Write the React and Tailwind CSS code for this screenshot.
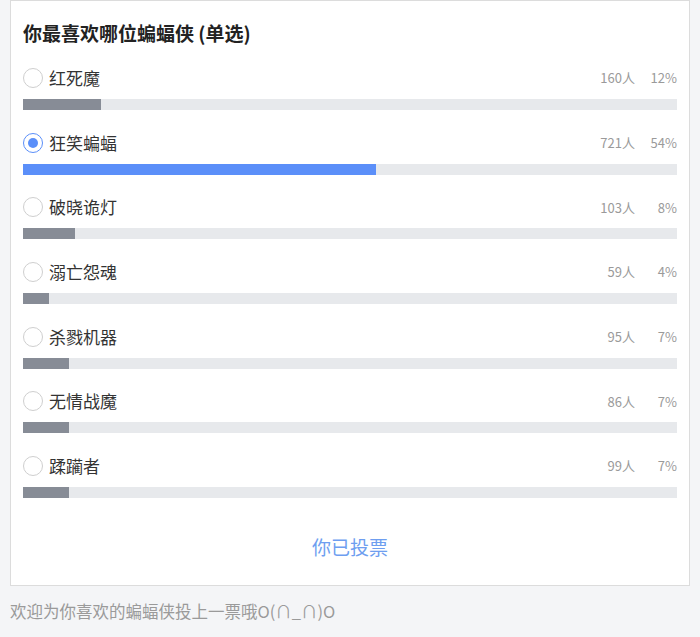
import React from "react";

const options = [
  { name: "红死魔", count: 160, pct: 12 },
  { name: "狂笑蝙蝠", count: 721, pct: 54, selected: true },
  { name: "破晓诡灯", count: 103, pct: 8 },
  { name: "溺亡怨魂", count: 59, pct: 4 },
  { name: "杀戮机器", count: 95, pct: 7 },
  { name: "无情战魔", count: 86, pct: 7 },
  { name: "蹂躏者", count: 99, pct: 7 },
];

const font = { fontFamily: '"Noto Sans CJK SC", "Microsoft YaHei", "Liberation Sans", sans-serif' };

export default function App() {
  return (
    <div className="w-[700px] h-[637px] bg-[#f4f5f7] flex flex-col" style={font}>
      <div className="mx-[10px] bg-white border border-[#dcdcdc] px-[12px] pt-[20px] h-[586px] flex flex-col">
        <div className="text-[19px] leading-[24px] font-bold text-[#222]">你最喜欢哪位蝙蝠侠 (单选)</div>
        <div className="mt-[22px] flex flex-col">
          {options.map((o, i) => (
            <div key={i} className="flex flex-col h-[64.67px]">
              <div className="flex items-center h-[22px]">
                {o.selected ? (
                  <span className="w-[20px] h-[20px] rounded-full border border-[#5b8ff9] flex items-center justify-center">
                    <span className="w-[10px] h-[10px] rounded-full bg-[#5b8ff9]" />
                  </span>
                ) : (
                  <span className="w-[20px] h-[20px] rounded-full border border-[#cfcfcf]" />
                )}
                <span className="ml-[6px] text-[17px] text-[#333] leading-[22px]">{o.name}</span>
                <span className="ml-auto text-[13px] text-[#9a9a9a] w-[60px] text-right">{o.count}人</span>
                <span className="text-[13px] text-[#9a9a9a] w-[42px] text-right">{o.pct}%</span>
              </div>
              <div className="mt-[10px] h-[11px] w-full bg-[#e7e9ec]">
                <div
                  className={o.selected ? "h-full bg-[#5b8ff9]" : "h-full bg-[#878c96]"}
                  style={{ width: `${o.pct}%` }}
                />
              </div>
            </div>
          ))}
        </div>
        <div className="mt-[14px] text-center text-[19px] text-[#6e9ef0] leading-[26px]">你已投票</div>
      </div>
      <div className="px-[10px] pt-[13px] text-[16.5px] leading-[24px] text-[#9a9a9a]">欢迎为你喜欢的蝙蝠侠投上一票哦O(∩_∩)O</div>
    </div>
  );
}
